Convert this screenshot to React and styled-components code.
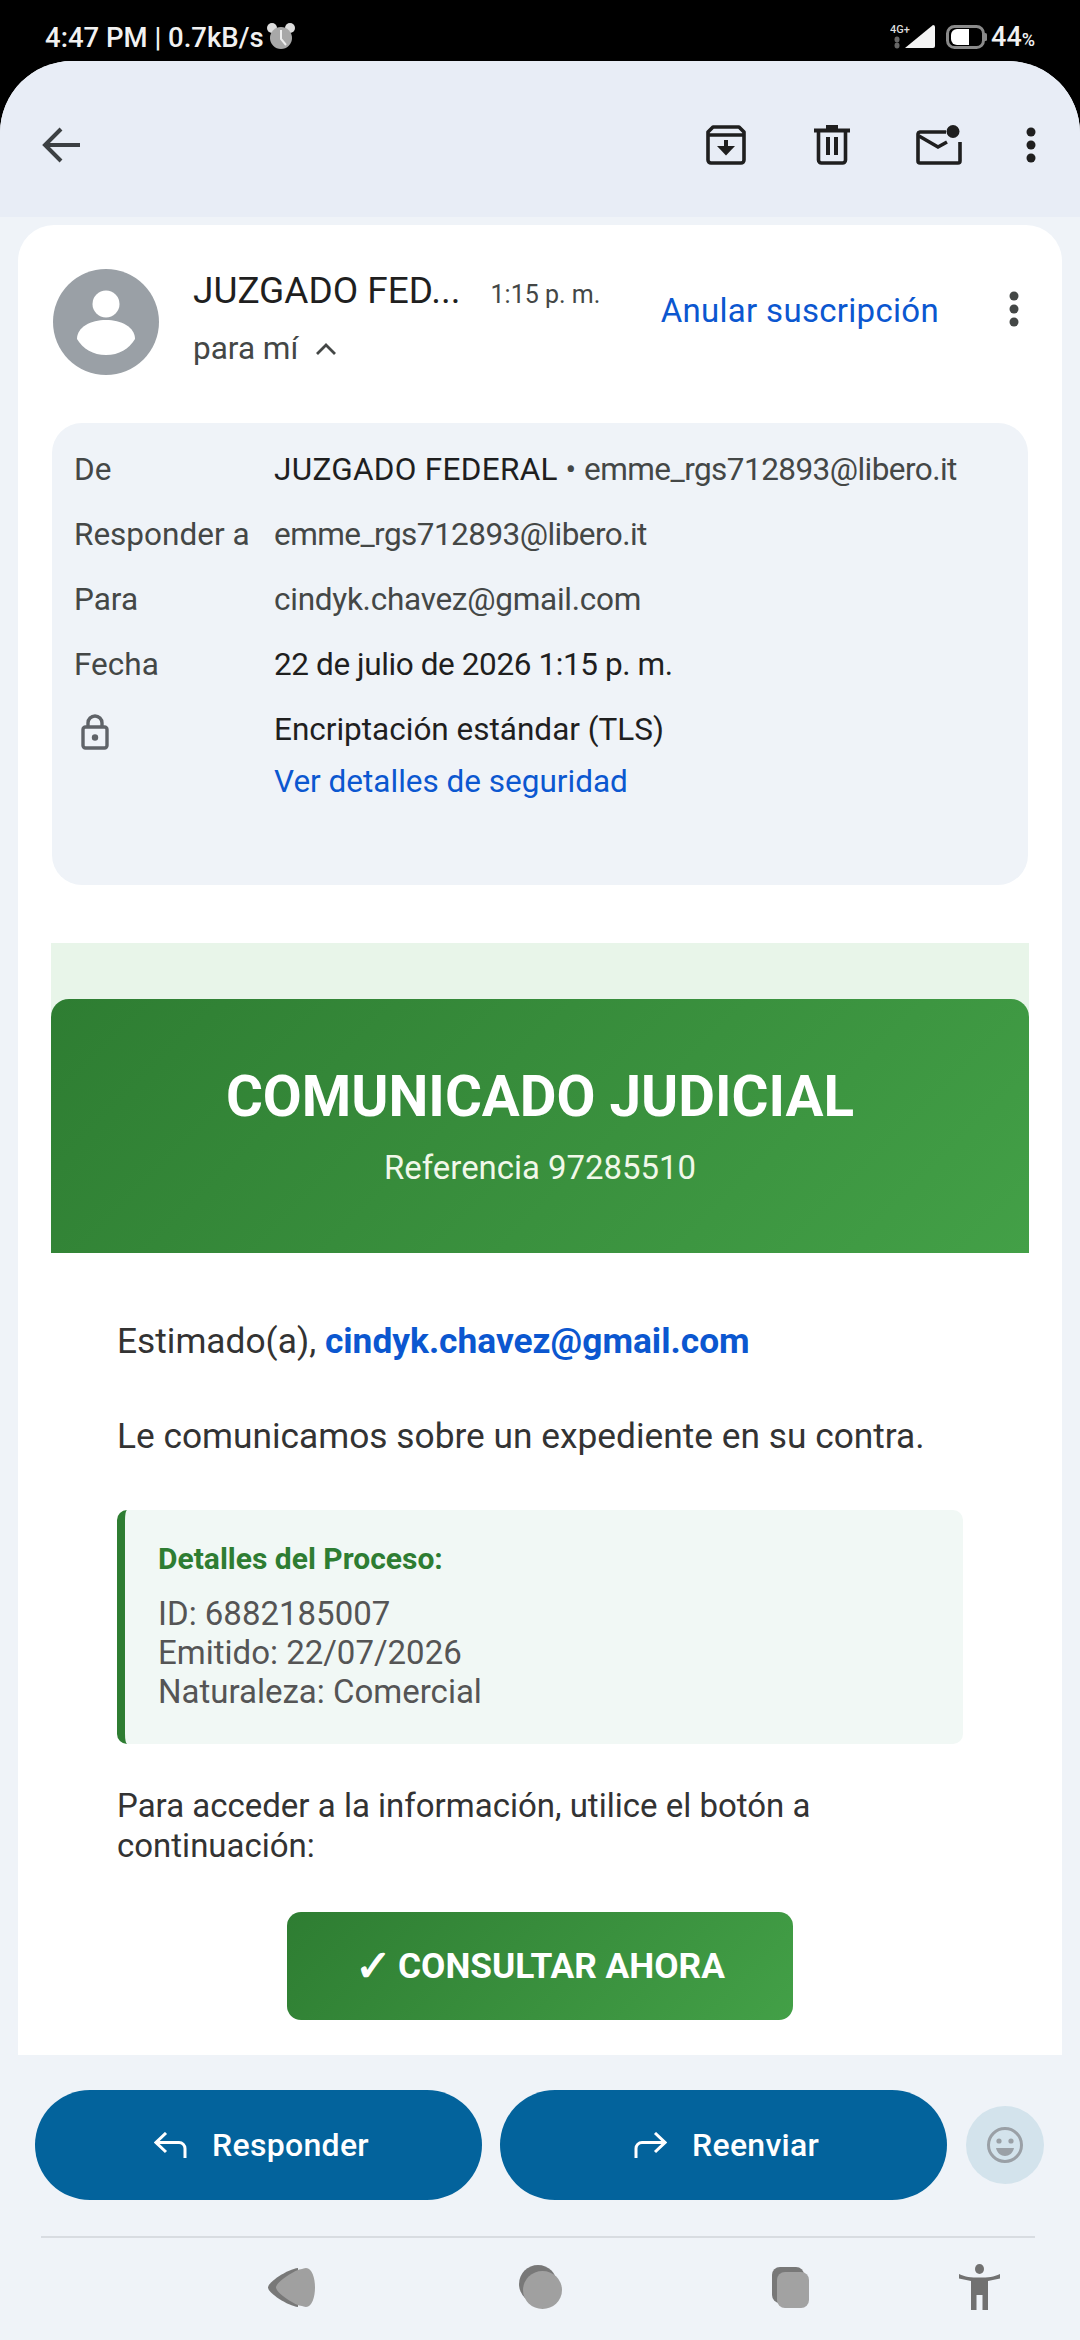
import React from 'react';
import styled, { createGlobalStyle } from 'styled-components';

const GlobalStyle = createGlobalStyle`
  html, body {
    margin: 0;
    padding: 0;
    background: #000;
  }
  * {
    box-sizing: border-box;
  }
`;

const Back = () => (
  <svg width="44" height="44" viewBox="0 0 44 44" fill="none" stroke="#3c4043" strokeWidth="4">
    <path d="M40 22H6M21 6L5 22l16 16" />
  </svg>
);

const MoveIcon = () => (
  <svg width="40" height="40" viewBox="0 0 40 40" fill="none" stroke="#1f1f1f" strokeWidth="3.6">
    <path d="M7 2h26l5 5v28a3 3 0 0 1-3 3H5a3 3 0 0 1-3-3V7z" strokeLinejoin="round" />
    <path d="M3 10h34" />
    <path d="M20 15v9" strokeWidth="4" />
    <path d="M11 21h18l-9 9.5z" fill="#1f1f1f" stroke="none" />
  </svg>
);

const TrashIcon = () => (
  <svg width="36" height="40" viewBox="0 0 36 40" fill="none" stroke="#1f1f1f" strokeWidth="3.6">
    <path d="M0 5.5h36" strokeWidth="4" />
    <path d="M12 0h12v4H12z" fill="#1f1f1f" stroke="none" />
    <path d="M4.5 6v29a3 3 0 0 0 3 3h21a3 3 0 0 0 3-3V6" />
    <path d="M14 12v18M22 12v18" strokeWidth="4" />
  </svg>
);

const UnreadIcon = () => (
  <svg width="46" height="40" viewBox="0 0 46 40" fill="none" stroke="#1f1f1f" strokeWidth="3.6">
    <path d="M30 7H4a2.4 2.4 0 0 0-2 2v27a2 2 0 0 0 2 2h38a2 2 0 0 0 2-2V17" />
    <path d="M3 11l19 11 9-5" />
    <circle cx="37" cy="6.5" r="6.5" fill="#1f1f1f" stroke="none" />
  </svg>
);

const Dots = ({ color = '#1f1f1f' }) => (
  <svg width="12" height="36" viewBox="0 0 12 36" fill={color}>
    <circle cx="6" cy="5" r="4.5" />
    <circle cx="6" cy="18" r="4.5" />
    <circle cx="6" cy="31" r="4.5" />
  </svg>
);

const AvatarIcon = () => (
  <svg width="106" height="106" viewBox="0 0 106 106">
    <circle cx="53" cy="53" r="53" fill="#9aa0a6" />
    <circle cx="53" cy="35" r="13.5" fill="#fff" />
    <path d="M24 70c0-12 14-19 29-19s29 7 29 19c-6 10-16 16-29 16s-23-6-29-16z" fill="#fff" />
  </svg>
);

const Chevron = () => (
  <svg width="22" height="14" viewBox="0 0 22 14" fill="none" stroke="#444746" strokeWidth="2.8">
    <path d="M2 12l9-9 9 9" />
  </svg>
);

const LockIcon = () => (
  <svg width="28" height="36" viewBox="0 0 28 36" fill="none" stroke="#5f6368" strokeWidth="3.4">
    <path d="M7 13V9a7 7 0 0 1 14 0v4" />
    <rect x="2" y="13" width="24" height="21" rx="2.5" />
    <circle cx="14" cy="23.5" r="3.2" fill="#5f6368" stroke="none" />
  </svg>
);

const ReplyIcon = () => (
  <svg width="33" height="26" viewBox="0 0 33 26" fill="none" stroke="#fff" strokeWidth="3">
    <path d="M12 1L2 10.5l10 9.5M3 10.5h22a6 6 0 0 1 6 6V26" />
  </svg>
);

const ForwardIcon = () => (
  <svg width="33" height="26" viewBox="0 0 33 26" fill="none" stroke="#fff" strokeWidth="3">
    <path d="M21 1l10 9.5L21 20M30 10.5H8a6 6 0 0 0-6 6V26" />
  </svg>
);

const SmileIcon = () => (
  <svg width="38" height="38" viewBox="0 0 38 38" fill="none">
    <circle cx="19" cy="19" r="16.5" stroke="#9aa0a6" strokeWidth="3" />
    <circle cx="13" cy="15" r="2.6" fill="#9aa0a6" />
    <circle cx="25" cy="15" r="2.6" fill="#9aa0a6" />
    <path d="M10 22h18c-1 5-5 8-9 8s-8-3-9-8z" fill="#9aa0a6" />
  </svg>
);

const AlarmIcon = () => (
  <svg width="30" height="30" viewBox="0 0 30 30">
    <circle cx="6" cy="6" r="5" fill="#ddd" />
    <circle cx="24" cy="6" r="5" fill="#ddd" />
    <circle cx="15" cy="16" r="11" fill="#a8a8a8" />
    <path d="M15 8v9l5 6" stroke="#eee" strokeWidth="2" fill="none" />
  </svg>
);

const SignalIcon = () => (
  <svg width="46" height="30" viewBox="0 -2 46 30">
    <text x="0" y="9" fontSize="11" fontFamily="Roboto" fill="#ddd">4G+</text>
    <ellipse cx="7" cy="15.5" rx="2.5" ry="3" fill="#666" />
    <ellipse cx="7" cy="21.5" rx="2.5" ry="3" fill="#666" />
    <path d="M15 24L43 1a2 2 0 0 1 2 2v19a2 2 0 0 1-2 2z" fill="#f4f4f4" />
  </svg>
);

const BatteryIcon = () => (
  <svg width="41" height="24" viewBox="0 0 41 24">
    <rect x="1.5" y="1.5" width="36" height="21" rx="7" fill="none" stroke="#8a8a8a" strokeWidth="3" />
    <path d="M11 4h12v16H11a6 6 0 0 1-6-6v-4a6 6 0 0 1 6-6z" fill="#fff" />
    <rect x="38" y="8" width="3" height="8" rx="1.5" fill="#8a8a8a" />
  </svg>
);

const NavBack = () => (
  <svg width="47" height="39" viewBox="0 0 47 39">
    <path d="M30 0C20 1 0 14 0 19.5S20 38 30 39z" fill="#787878" />
    <path d="M38 0c6 0 9 10 9 19.5S44 39 38 39c-2 0-3-1-4-1-6 0-26-13-26-18.5S28 1 34 1c1 0 2-1 4-1z" fill="#a0a0a0" />
  </svg>
);

const NavHome = () => (
  <svg width="43" height="44" viewBox="0 0 43 44">
    <ellipse cx="19" cy="19" rx="19" ry="19" fill="#787878" />
    <ellipse cx="23.5" cy="25" rx="19.5" ry="19" fill="#a0a0a0" />
  </svg>
);

const NavRecents = () => (
  <svg width="37" height="41" viewBox="0 0 37 41">
    <rect x="0" y="0" width="32" height="36" rx="8" fill="#787878" />
    <rect x="5" y="5" width="32" height="36" rx="8" fill="#a2a2a2" />
  </svg>
);

const NavAccessibility = () => (
  <svg width="41" height="46" viewBox="0 0 41 46" fill="#717171">
    <ellipse cx="20.5" cy="5" rx="4.5" ry="5" />
    <path d="M0 10c6 3 12 3.5 20.5 3.5S35 13 41 10l0 4.5-12 2.500v29h-5.500V31h-6v15H12V17L0 14.500z" />
  </svg>
);

const Page = styled.div`
  width: 1080px;
  height: 2340px;
  display: flex;
  flex-direction: column;
  overflow: hidden;
  background: #000;
  font-family: Roboto, sans-serif;
`;

const StatusBar = styled.div`
  height: 61px;
  flex-shrink: 0;
  padding: 13px 45px 0 45px;
  display: flex;
  align-items: center;
  justify-content: space-between;
  color: #f1f1f1;
  font-size: 27.5px;
  font-weight: 500;
`;

const StatusGroup = styled.div`
  display: flex;
  align-items: center;
  gap: ${(p) => p.$gap}px;
`;

const Percent = styled.span`
  margin-left: -6px;
  font-size: 27px;
  small {
    font-size: 18px;
  }
`;

const Shell = styled.div`
  flex: 1;
  min-height: 0;
  display: flex;
  flex-direction: column;
  background: #eff3f8;
  border-radius: 72px 72px 0 0;
`;

const AppBar = styled.div`
  height: 156px;
  flex-shrink: 0;
  display: flex;
  align-items: center;
  padding: 12px 43px 0 40px;
  background: #e8edf6;
  border-radius: 72px 72px 0 0;
`;

const ActionGroup = styled.div`
  margin-left: auto;
  display: flex;
  align-items: center;
`;

const ActionSlot = styled.div`
  display: flex;
  justify-content: center;
  margin-left: ${(p) => p.$gap}px;
`;

const Main = styled.main`
  flex: 1;
  min-height: 0;
  padding: 8px 18px 0;
`;

const Card = styled.div`
  height: 100%;
  overflow: hidden;
  background: #fff;
  border-radius: 36px 36px 0 0;
  padding: 0 34px;
`;

const MessageHead = styled.div`
  height: 198px;
  padding: 44px 0 0 1px;
  display: flex;
  align-items: flex-start;
`;

const Sender = styled.div`
  margin-left: 34px;
  width: 295px;
`;

const SenderName = styled.div`
  display: flex;
  align-items: baseline;
  white-space: nowrap;
  font-size: 37px;
  line-height: 44px;
  color: #1f1f1f;
`;

const Time = styled.span`
  margin-left: 30px;
  font-size: 25px;
  color: #444746;
`;

const ToLine = styled.div`
  margin-top: 11px;
  display: flex;
  align-items: center;
  gap: 17px;
  font-size: 31.5px;
  line-height: 42px;
  color: #444746;
`;

const Unsubscribe = styled.a`
  margin-left: auto;
  margin-top: 20px;
  font-size: 33px;
  line-height: 44px;
  letter-spacing: 0.3px;
  color: #0b57d0;
  white-space: nowrap;
`;

const MoreSlot = styled.div`
  margin: 22px 8px 0 69px;
`;

const DetailPanel = styled.div`
  height: 462px;
  background: #eff3f8;
  border-radius: 30px;
  padding: 25px 22px 0;
  display: grid;
  grid-template-columns: 200px 1fr;
  grid-auto-rows: 65px;
  align-content: start;
  font-size: 31.5px;
  color: #444746;
`;

const DetailLabel = styled.div`
  line-height: 44px;
  white-space: nowrap;
`;

const LockSlot = styled.div`
  display: flex;
  padding: 6px 0 0 7px;
`;

const DetailValue = styled.div`
  line-height: 44px;
  white-space: nowrap;
  color: ${(p) => (p.$dark ? '#1f1f1f' : '#444746')};
`;

const Strong = styled.span`
  color: #1f1f1f;
  letter-spacing: ${(p) => p.$spacing || 0}px;
`;

const Mono = styled.span`
  letter-spacing: ${(p) => p.$spacing}px;
`;

const SecurityLink = styled.a`
  display: block;
  margin-top: 8px;
  color: #0b57d0;
`;

const Mail = styled.div`
  margin: 58px -1px 0;
  background: #e8f5e9;
  padding-top: 56px;
`;

const Banner = styled.div`
  height: 254px;
  background: linear-gradient(135deg, #2e7d32, #43a047);
  border-radius: 18px 18px 0 0;
  display: flex;
  flex-direction: column;
  align-items: center;
  color: #fff;
  padding-top: 62px;
`;

const BannerTitle = styled.div`
  font-size: 56.5px;
  font-weight: 700;
  line-height: 72px;
`;

const BannerRef = styled.div`
  margin-top: 13px;
  font-size: 32.9px;
  line-height: 44px;
  color: #f1f8e9;
`;

const MailBody = styled.div`
  background: #fff;
  padding: 68px 66px 0;
`;

const Para = styled.p`
  margin: 0 0 ${(p) => p.$after}px;
  font-size: ${(p) => p.$size}px;
  line-height: 40px;
  color: #333;
`;

const Address = styled.a`
  color: #0b57d0;
  font-weight: 700;
`;

const ProcessBox = styled.div`
  height: 234px;
  background: #f1f8f5;
  border-left: 8px solid #2e7d32;
  border-radius: 10px;
  padding: 31px 33px 0;
  margin-bottom: 42px;
`;

const ProcessTitle = styled.div`
  font-size: 30px;
  font-weight: 700;
  line-height: 36px;
  color: #2e7d32;
  margin-bottom: 17px;
`;

const ProcessLine = styled.div`
  font-size: 33px;
  line-height: 39px;
  color: #555;
`;

const CtaRow = styled.div`
  display: flex;
  justify-content: center;
  margin-top: 46px;
`;

const Cta = styled.a`
  width: 506px;
  height: 108px;
  display: flex;
  align-items: center;
  justify-content: center;
  gap: 6px;
  border-radius: 14px;
  background: linear-gradient(135deg, #2e7d32, #43a047);
  color: #fff;
  font-size: 35.3px;
  font-weight: 700;
`;

const CheckMark = styled.span`
  font-family: 'DejaVu Sans', sans-serif;
  font-size: 44px;
  line-height: 1;
  -webkit-text-stroke: 1.2px #fff;
`;

const ReplyBar = styled.div`
  height: 181px;
  flex-shrink: 0;
  padding: 35px 36px 0 35px;
  display: flex;
  align-items: flex-start;
`;

const PillButton = styled.button`
  width: 448px;
  height: 110px;
  margin-right: 18px;
  padding: 0 0 0 6px;
  border: none;
  border-radius: 55px;
  background: #03639c;
  color: #fff;
  font-family: inherit;
  font-size: 32px;
  font-weight: 500;
  letter-spacing: 0.3px;
  display: flex;
  align-items: center;
  justify-content: center;
  gap: 25px;
`;

const EmojiButton = styled.div`
  width: 78px;
  height: 78px;
  margin: 16px 0 0 1px;
  border-radius: 50%;
  background: #d3e3ec;
  display: flex;
  align-items: center;
  justify-content: center;
`;

const SystemNav = styled.div`
  height: 104px;
  flex-shrink: 0;
  margin: 0 45px 0 41px;
  padding-bottom: 4px;
  border-top: 2px solid #d8dce1;
  display: grid;
  grid-template-columns: 274px 247px 247px 191px;
  align-items: center;
  justify-items: end;
`;

const InfoRows = [
  ['De', <><Strong $spacing={0.3}>JUZGADO FEDERAL</Strong> • <Mono $spacing={-0.55}>emme_rgs712893@libero.it</Mono></>],
  ['Responder a', <Mono $spacing={-0.55}>emme_rgs712893@libero.it</Mono>],
  ['Para', <Mono $spacing={-0.26}>cindyk.chavez@gmail.com</Mono>],
  ['Fecha', <Strong $spacing={-0.4}>22 de julio de 2026 1:15 p. m.</Strong>],
];

const App = () => (
  <>
    <GlobalStyle />
    <Page>
      <StatusBar>
        <StatusGroup $gap={2}>
          4:47 PM | 0.7kB/s
          <AlarmIcon />
        </StatusGroup>
        <StatusGroup $gap={10}>
          <SignalIcon />
          <BatteryIcon />
          <Percent>44<small>%</small></Percent>
        </StatusGroup>
      </StatusBar>
      <Shell>
        <AppBar>
          <Back />
          <ActionGroup>
            <MoveIcon />
            <ActionSlot $gap={68}><TrashIcon /></ActionSlot>
            <ActionSlot $gap={66}><UnreadIcon /></ActionSlot>
            <ActionSlot $gap={63}><Dots /></ActionSlot>
          </ActionGroup>
        </AppBar>
        <Main>
          <Card>
            <MessageHead>
              <AvatarIcon />
              <Sender>
                <SenderName>
                  JUZGADO FED...
                  <Time>1:15 p. m.</Time>
                </SenderName>
                <ToLine>para mí <Chevron /></ToLine>
              </Sender>
              <Unsubscribe>Anular suscripción</Unsubscribe>
              <MoreSlot><Dots color="#444746" /></MoreSlot>
            </MessageHead>
            <DetailPanel>
              {InfoRows.map(([label, value]) => (
                <React.Fragment key={label}>
                  <DetailLabel>{label}</DetailLabel>
                  <DetailValue>{value}</DetailValue>
                </React.Fragment>
              ))}
              <LockSlot><LockIcon /></LockSlot>
              <DetailValue $dark>
                Encriptación estándar (TLS)
                <SecurityLink>Ver detalles de seguridad</SecurityLink>
              </DetailValue>
            </DetailPanel>
            <Mail>
              <Banner>
                <BannerTitle>COMUNICADO JUDICIAL</BannerTitle>
                <BannerRef>Referencia 97285510</BannerRef>
              </Banner>
              <MailBody>
                <Para $size={35.3} $after={55}>
                  Estimado(a), <Address>cindyk.chavez@gmail.com</Address>
                </Para>
                <Para $size={35.3} $after={54}>Le comunicamos sobre un expediente en su contra.</Para>
                <ProcessBox>
                  <ProcessTitle>Detalles del Proceso:</ProcessTitle>
                  <ProcessLine>ID: 6882185007</ProcessLine>
                  <ProcessLine>Emitido: 22/07/2026</ProcessLine>
                  <ProcessLine>Naturaleza: Comercial</ProcessLine>
                </ProcessBox>
                <Para $size={33} $after={0}>Para acceder a la información, utilice el botón a continuación:</Para>
                <CtaRow>
                  <Cta><CheckMark>✓</CheckMark> CONSULTAR AHORA</Cta>
                </CtaRow>
              </MailBody>
            </Mail>
          </Card>
        </Main>
        <ReplyBar>
          <PillButton><ReplyIcon />Responder</PillButton>
          <PillButton><ForwardIcon />Reenviar</PillButton>
          <EmojiButton><SmileIcon /></EmojiButton>
        </ReplyBar>
        <SystemNav>
          <NavBack />
          <NavHome />
          <NavRecents />
          <NavAccessibility />
        </SystemNav>
      </Shell>
    </Page>
  </>
);

export default App;
